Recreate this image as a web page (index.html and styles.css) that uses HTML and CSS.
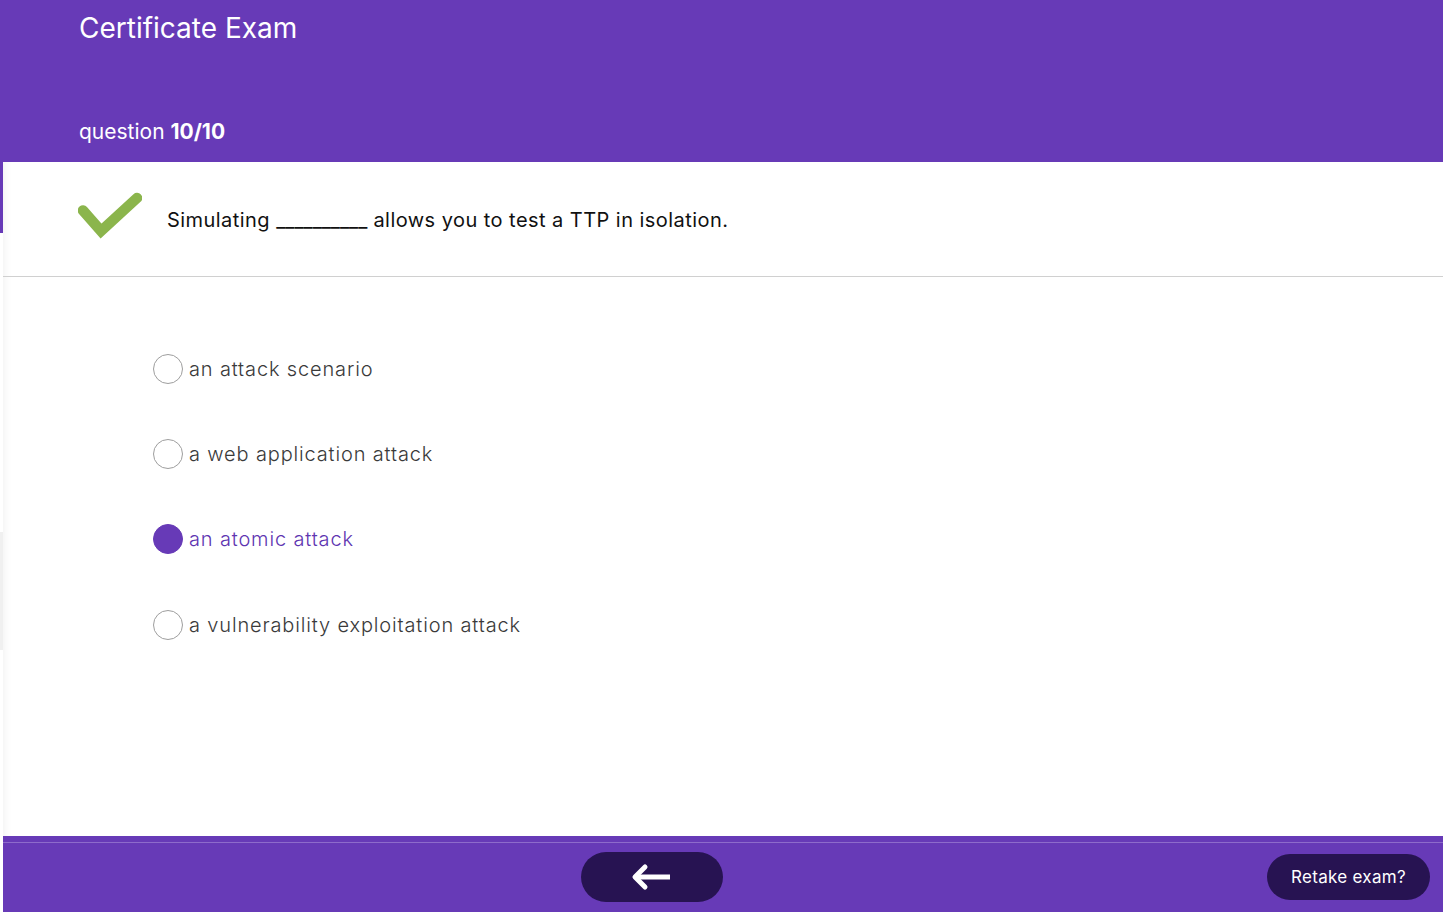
FILE: index.html
```html
<!DOCTYPE html>
<html lang="en">
<head>
<meta charset="utf-8">
<title>Certificate Exam</title>
<link rel="stylesheet" href="styles.css">
</head>
<body>
<div class="page">
  <div class="edge"></div>
  <main class="main">
    <header class="header">
      <h1 class="title">Certificate Exam</h1>
      <div class="progress">question <strong>10/10</strong></div>
    </header>
    <section class="question">
      <svg class="check" width="64" height="48" viewBox="0 0 64 48" aria-hidden="true">
        <path d="M5 18.5 L23 39 L59 6" fill="none" stroke="#8bb54c" stroke-width="10.5" stroke-linecap="round" stroke-linejoin="miter"/>
      </svg>
      <p class="qtext">Simulating <span class="blank">__________</span> allows you to test a TTP in isolation.</p>
    </section>
    <section class="options">
      <label class="option"><span class="radio"></span><span class="label">an attack scenario</span></label>
      <label class="option"><span class="radio"></span><span class="label">a web application attack</span></label>
      <label class="option selected"><span class="radio"></span><span class="label">an atomic attack</span></label>
      <label class="option"><span class="radio"></span><span class="label">a vulnerability exploitation attack</span></label>
    </section>
    <footer class="footer">
      <button class="btn back" aria-label="Back">
        <svg width="44" height="28" viewBox="0 0 44 28" aria-hidden="true">
          <path d="M5 14 H40" stroke="#fff" stroke-width="5" fill="none"/>
          <path d="M15 4 L5 14 L15 24" stroke="#fff" stroke-width="5" fill="none" stroke-linecap="round" stroke-linejoin="round"/>
        </svg>
      </button>
      <button class="btn retake">Retake exam?</button>
    </footer>
  </main>
</div>
</body>
</html>
```
FILE: styles.css
```css
* { box-sizing: border-box; }
html, body { margin: 0; padding: 0; }
body {
  font-family: Inter, "Noto Sans", sans-serif;
  background: #ffffff;
  width: 1443px;
  height: 912px;
  overflow: hidden;
}
.page {
  display: flex;
  height: 912px;
}
.edge {
  width: 3px;
  flex: 0 0 3px;
  background: linear-gradient(to bottom, #673ab7 0, #673ab7 233px, #ffffff 233px, #ffffff 532px, #f0f0f0 532px, #f0f0f0 650px, #ffffff 650px);
}
.main {
  flex: 1;
  display: flex;
  flex-direction: column;
  box-shadow: inset 8px 0 8px -6px rgba(0,0,0,0.05);
}
.header {
  background: #673ab7;
  height: 162px;
  padding: 10px 0 0 76px;
  color: #fff;
  display: flex;
  flex-direction: column;
}
.title {
  margin: 0;
  font-size: 28px;
  font-weight: 400;
  line-height: 36px;
  letter-spacing: 0;
}
.progress {
  margin-top: 74px;
  font-size: 21px;
  line-height: 24px;
  letter-spacing: 0;
}
.progress strong { font-weight: 700; }
.question {
  height: 115px;
  border-bottom: 1px solid #d0d0d0;
  display: flex;
  align-items: center;
  padding-left: 75px;
  gap: 25px;
}
.check { flex: 0 0 auto; margin-top: -6px; }
.qtext {
  margin: 0;
  font-size: 20px;
  color: #111;
  letter-spacing: 0.45px;
  margin-top: 2px;
}
.blank { letter-spacing: 0; }
.options {
  flex: 1;
  padding: 77px 0 0 150px;
  display: flex;
  flex-direction: column;
}
.option {
  display: flex;
  gap: 6px;
  height: 85px;
  align-items: flex-start;
}
.option:last-child { margin-top: 1px; }
.radio {
  width: 30px;
  height: 30px;
  border-radius: 50%;
  border: 1px solid #9e9e9e;
  flex: 0 0 30px;
}
.label {
  font-size: 20px;
  font-weight: 300;
  line-height: 31px;
  color: #3a3a3a;
  letter-spacing: 0.85px;
}
.option.selected .radio {
  background: #673ab7;
  border-color: #673ab7;
}
.option.selected .label { color: #5e35b1; }
.footer {
  height: 76px;
  background: #673ab7;
  border-top: 6px solid #673ab7;
  box-shadow: inset 0 7px 0 -6px #8e6bcb;
  display: flex;
  align-items: flex-start;
  padding: 10px 13px 0 578px;
}
.btn {
  border: none;
  background: #271352;
  color: #fff;
  font-family: Inter, "Noto Sans", sans-serif;
  cursor: pointer;
}
.back {
  width: 142px;
  height: 50px;
  border-radius: 25px;
  display: flex;
  align-items: center;
  justify-content: center;
  padding: 0;
}
.retake {
  margin-left: auto;
  margin-top: 2px;
  width: 163px;
  height: 46px;
  border-radius: 23px;
  font-size: 17px;
  letter-spacing: 0.3px;
  padding: 0;
}
```
